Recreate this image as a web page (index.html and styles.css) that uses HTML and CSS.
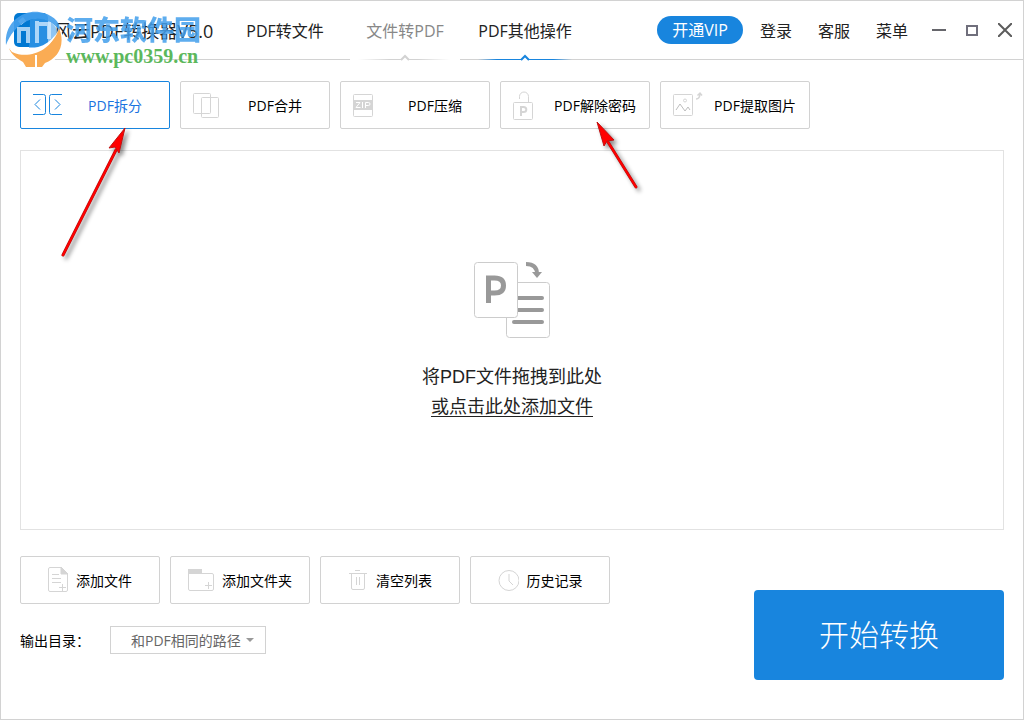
FILE: index.html
```html
<!DOCTYPE html>
<html lang="zh-CN">
<head>
  <meta charset="UTF-8">
  <meta name="viewport" content="width=device-width, initial-scale=1.0">
  <title>风云PDF转换器</title>
  <link rel="stylesheet" href="styles.css">
</head>
<body>
<div class="window">
  <header>
    <div class="brand">
      <svg class="logo" width="34" height="34" viewBox="0 0 34 34">
        <rect width="34" height="34" rx="5" fill="#0078d2"/>
        <path d="M4 8l5-4 3 4-5 4z" fill="#fff" opacity=".8"/>
      </svg>
      <h1>风云PDF转换器V5.0</h1>
    </div>
    <nav>
      <a href="#" class="tab">PDF转文件</a>
      <a href="#" class="tab hover">文件转PDF
        <svg class="mark" width="110" height="7" viewBox="0 0 110 7">
          <defs>
            <linearGradient id="fadeGrey">
              <stop offset="0" stop-color="#d2d2d2" stop-opacity="0"/>
              <stop offset=".35" stop-color="#d2d2d2"/>
              <stop offset=".65" stop-color="#d2d2d2"/>
              <stop offset="1" stop-color="#d2d2d2" stop-opacity="0"/>
            </linearGradient>
          </defs>
          <rect y="3" width="110" height="4" fill="#fff"/>
          <rect x="8" y="5" width="92" height="1" fill="url(#fadeGrey)"/>
          <path d="M51 6l4-4 4 4" fill="#fff" stroke="#d2d2d2" stroke-width="2"/>
        </svg>
      </a>
      <a href="#" class="tab current">PDF其他操作
        <svg class="mark" width="110" height="7" viewBox="0 0 110 7">
          <defs>
            <linearGradient id="fadeBlue">
              <stop offset="0" stop-color="#1885de" stop-opacity="0"/>
              <stop offset=".2" stop-color="#1885de"/>
              <stop offset=".8" stop-color="#1885de"/>
              <stop offset="1" stop-color="#1885de" stop-opacity="0"/>
            </linearGradient>
          </defs>
          <rect x="8" y="5" width="94" height="1" fill="url(#fadeBlue)"/>
          <path d="M51 6l4-4 4 4" fill="#fff" stroke="#1885de" stroke-width="2"/>
        </svg>
      </a>
    </nav>
    <div class="account">
      <button class="vip">开通VIP</button>
      <a href="#">登录</a>
      <a href="#">客服</a>
      <a href="#">菜单</a>
    </div>
    <div class="controls">
      <button aria-label="最小化">
        <svg width="14" height="14" viewBox="0 0 14 14"><path d="M0 7h14" stroke="#66666b" stroke-width="2"/></svg>
      </button>
      <button aria-label="最大化">
        <svg width="14" height="14" viewBox="0 0 14 14"><rect x="2" y="3" width="10" height="9" fill="none" stroke="#706f7c" stroke-width="2"/></svg>
      </button>
      <button aria-label="关闭">
        <svg width="14" height="14" viewBox="0 0 14 14"><path d="M0 0l14 14M14 0L0 14" stroke="#5c5c5c" stroke-width="2"/></svg>
      </button>
    </div>
  </header>

  <main>
    <div class="tools">
      <button class="tool selected">
        <svg width="34" height="28" viewBox="0 0 34 28" fill="none" stroke="#1885de">
          <path d="M0 3.500h10.500q2 0 2 2v16q0 2-2 2H0M29 3.500H18.500q-2 0-2 2v16q0 2 2 2H29"/>
          <path d="M7 8.500l-5 5 5 5M22 8.500l5 5-5 5"/>
        </svg>
        <span>PDF拆分</span>
      </button>
      <button class="tool">
        <svg width="34" height="28" viewBox="0 0 34 28" fill="none" stroke="#d5d5d5">
          <rect x=".5" y="2.500" width="17" height="20" rx="1"/>
          <rect x="8.500" y="6.500" width="17" height="20" rx="1"/>
        </svg>
        <span>PDF合并</span>
      </button>
      <button class="tool">
        <svg width="34" height="28" viewBox="0 0 34 28" fill="none" stroke="#d5d5d5">
          <rect x=".5" y="3.500" width="19" height="22" rx="1"/>
          <path d="M0 9h20v10H0z" fill="#d5d5d5" stroke="none"/>
          <path d="M3 11.500h4l-4 5h4.500M9.500 11v6M12.500 17v-5.500h3q1.500 0 1.500 1.500t-1.500 1.500h-3" stroke="#fff"/>
        </svg>
        <span>PDF压缩</span>
      </button>
      <button class="tool">
        <svg width="34" height="28" viewBox="0 0 34 28" fill="none" stroke="#d5d5d5">
          <rect x=".5" y="11.500" width="19" height="17" rx="1"/>
          <path d="M6.500 8V5.500a4.500 4.500 0 0 1 9 0V11"/>
          <path d="M8 25v-9h2.500q2.800 0 2.800 2.500t-2.800 2.500H8" stroke-width="2"/>
        </svg>
        <span>PDF解除密码</span>
      </button>
      <button class="tool">
        <svg width="34" height="28" viewBox="0 0 34 28" fill="none" stroke="#d5d5d5">
          <rect x=".5" y="3.500" width="19" height="21" rx="1"/>
          <circle cx="12" cy="9.500" r="1.500"/>
          <path d="M3 19l4-6 5 7 3-4 2 3" stroke="#bdbdbd"/>
          <path d="M23 8q4 0 4-6M24.500 4.500L27 2l2 2.500" stroke-width="1.500"/>
        </svg>
        <span>PDF提取图片</span>
      </button>
    </div>

    <section class="drop">
      <svg width="76" height="76" viewBox="0 0 76 76">
        <rect x="32.500" y="20.500" width="43" height="55" rx="3" fill="#fff" stroke="#ccc"/>
        <path d="M40 36h28M40 48h28M40 60h28" stroke="#999" stroke-width="4" stroke-linecap="round"/>
        <rect x=".5" y=".5" width="43" height="55" rx="3" fill="#fff" stroke="#ccc"/>
        <path d="M14.500 41V16h6q9 0 9 7.500t-9 7.500h-6" fill="none" stroke="#999" stroke-width="5"/>
        <path d="M52 2q11 0 11 10" fill="none" stroke="#999" stroke-width="4"/>
        <path d="M58 10h10l-5 6z" fill="#999"/>
      </svg>
      <p>将PDF文件拖拽到此处</p>
      <a href="#">或点击此处添加文件</a>
    </section>

    <div class="bottom">
      <div class="options">
        <div class="actions">
          <button>
            <svg width="20" height="28" viewBox="0 0 20 28" fill="none" stroke="#d5d5d5">
              <path d="M13 1.500H2q-1.500 0-1.500 1.500v21q0 1.500 1.500 1.500h16q1.500 0 1.500-1.500V8z"/>
              <path d="M13 1v7h7z" fill="#d5d5d5"/>
              <path d="M4 8.500h7M4 12.500h9M4 16.500h9M11 21.500h7M14.500 18v7"/>
            </svg>
            添加文件
          </button>
          <button>
            <svg width="26" height="28" viewBox="0 0 26 28" fill="none" stroke="#d5d5d5">
              <path d="M0 3h14v4H0z" fill="#d5d5d5" stroke="none"/>
              <path d="M.5 6v17q0 1.500 1.500 1.500h22q1.500 0 1.500-1.500V9q0-1.500-1.500-1.500H.5M17 19.500h7M20.500 16v7"/>
            </svg>
            添加文件夹
          </button>
          <button>
            <svg width="20" height="28" viewBox="0 0 20 28" fill="none" stroke="#d5d5d5">
              <path d="M7 4.500h5M1 7.500h18M3.500 8v14q0 1.500 1.500 1.500h10q1.500 0 1.500-1.500V8M8.500 11v8M11.500 11v8"/>
            </svg>
            清空列表
          </button>
          <button>
            <svg width="21" height="28" viewBox="0 0 21 28" fill="none" stroke="#d5d5d5">
              <circle cx="11" cy="14.500" r="10"/>
              <path d="M11 8v7l4 4"/>
            </svg>
            历史记录
          </button>
        </div>
        <div class="output">
          <label for="outputDir">输出目录：</label>
          <span class="picker">
            <select id="outputDir">
              <option>和PDF相同的路径</option>
            </select>
          </span>
        </div>
      </div>
      <button class="start">开始转换</button>
    </div>
  </main>

  <!-- site stamp -->
  <div class="stamp">
    <svg width="58" height="60" viewBox="0 0 58 60">
      <path d="M1 35C-1 12 18 0 34 2c13 2 22 10 21 19-9-12-21-15-33-10C11 16 5 25 1 35z" fill="#429fec" opacity=".9"/>
      <path d="M25 10c12-4 23 1 28 11 0 8-7 14-16 17H24z" fill="#429fec" opacity=".6"/>
      <path d="M14 33V19h9v14M32 11v22M32 14h12v15" fill="none" stroke="#d9edff" stroke-width="4" opacity=".75"/>
      <path d="M2 37c16 6 42 2 51-16l3-1c6 18-3 30-14 35H19C11 50 5 44 2 37z" fill="#fff"/>
      <path d="M4 38c18 9 44 3 50-20 7 17-1 30-14 35l-3 4h-5V45h-2v12h-9l-3-5C11 48 6 44 4 38z" fill="#faac54"/>
      <path d="M3 37c14 8 38 4 47-12-5 15-26 25-43 17z" fill="#fff"/>
    </svg>
    <div class="stamp-text">
      <strong>河东软件园</strong>
      <span>www.pc0359.cn</span>
    </div>
  </div>

  <!-- pointer arrows -->
  <svg class="pointer pointer-split" width="76" height="140" viewBox="0 0 76 140">
    <path d="M6 131L59 26" stroke="#b01010" stroke-width="3" stroke-linecap="round"/>
    <path d="M6 131L59 26" stroke="#f00" stroke-width="2" stroke-linecap="round"/>
    <path d="M68 4L52 24l6-1 4 6z" fill="#f00" stroke="#c01010"/>
  </svg>
  <svg class="pointer pointer-unlock" width="56" height="80" viewBox="0 0 56 80">
    <path d="M45 68L17 23" stroke="#b01010" stroke-width="3" stroke-linecap="round"/>
    <path d="M45 68L17 23" stroke="#f00" stroke-width="2" stroke-linecap="round"/>
    <path d="M6 3l7 24 3-5 7-1z" fill="#f00" stroke="#c01010"/>
  </svg>
</div>
</body>
</html>
```
FILE: styles.css
```css
* { box-sizing: border-box; }

body {
  margin: 0;
  font-family: "Open Sans", "Noto Sans CJK SC", sans-serif;
  font-size: 14px;
  color: #000;
  background: #fff;
}

button, select {
  font: inherit;
  color: inherit;
  background: #fff;
  cursor: pointer;
}

a {
  color: inherit;
  text-decoration: none;
}

.window {
  position: relative;
  display: flex;
  flex-direction: column;
  min-height: 100vh;
  border: 1px solid #d2d2d2;
}

/* Header */
header {
  display: flex;
  align-items: center;
  height: 59px;
  padding-right: 11px;
  border-bottom: 1px solid #d2d2d2;
  font-size: 16px;
  color: #222;
}

.brand {
  display: flex;
  align-items: center;
  gap: 6px;
  width: 224px;
  padding-left: 13px;
}

h1 {
  margin: 0;
  font-size: 18px;
  font-weight: 400;
  white-space: nowrap;
}

nav {
  display: flex;
  align-self: stretch;
}

.tab {
  position: relative;
  display: flex;
  align-items: center;
  justify-content: center;
  width: 120px;
  white-space: nowrap;
}

.tab.hover {
  color: #888;
}

.mark {
  position: absolute;
  left: 5px;
  bottom: -2px;
}

.account {
  display: flex;
  align-items: center;
  gap: 26px;
  margin-left: auto;
}

.vip {
  width: 86px;
  height: 28px;
  margin-right: -9px;
  padding: 0;
  border: none;
  border-radius: 14px;
  line-height: 28px;
  color: #fff;
  background: #1885de;
}

.controls {
  display: flex;
  gap: 19px;
  margin-left: 24px;
}

.controls button {
  display: flex;
  padding: 0;
  border: none;
}

/* Content */
main {
  display: flex;
  flex: 1;
  flex-direction: column;
  padding: 21px 19px 39px;
}

.tools, .actions {
  display: flex;
  gap: 10px;
}

.tool {
  display: flex;
  align-items: center;
  width: 150px;
  height: 48px;
  padding: 0 6px 0 12px;
  border: 1px solid #d2d2d2;
  border-radius: 2px;
}

.tool svg {
  flex: none;
  overflow: visible;
}

.tool span {
  flex: 1;
  white-space: nowrap;
}

.selected {
  border-color: #1885de;
  color: #1a73e0;
}

.drop {
  display: flex;
  flex: 1;
  flex-direction: column;
  align-items: center;
  justify-content: center;
  min-height: 240px;
  margin: 21px 0 26px;
  border: 1px solid #e2e2e2;
  font-family: "Liberation Sans", "Noto Sans CJK SC", sans-serif;
  font-size: 18px;
  line-height: 22px;
  color: #222;
}

.drop p {
  margin: 28px 0 8px;
}

.drop a {
  text-decoration: underline;
  text-decoration-thickness: 1px;
  text-underline-offset: 3px;
}

/* Bottom bar */
.bottom {
  display: flex;
  align-items: flex-end;
  justify-content: space-between;
}

.options {
  padding-bottom: 26px;
}

.actions button {
  display: flex;
  align-items: center;
  justify-content: center;
  gap: 8px;
  width: 140px;
  height: 48px;
  padding: 0;
  border: 1px solid #d2d2d2;
  border-radius: 2px;
}

.output {
  display: flex;
  align-items: center;
  margin-top: 22px;
}

.output label {
  width: 90px;
  font-family: "Noto Sans CJK SC", sans-serif;
}

.picker {
  position: relative;
}

.picker select {
  display: block;
  width: 156px;
  height: 28px;
  padding: 0 20px;
  border: 1px solid #d2d2d2;
  border-radius: 0;
  color: #666;
  appearance: none;
}

.picker::after {
  content: "";
  position: absolute;
  top: 12px;
  right: 12px;
  border: 4px solid transparent;
  border-top-color: #999;
  border-bottom: none;
  pointer-events: none;
}

.start {
  width: 250px;
  height: 90px;
  padding: 0 0 4px;
  border: none;
  border-radius: 4px;
  font-size: 30px;
  font-weight: 300;
  color: #fff;
  background: #1885de;
}

/* Overlays */
.stamp {
  position: absolute;
  top: 9px;
  left: 4px;
  display: flex;
  gap: 3px;
  pointer-events: none;
}

.stamp-text {
  display: flex;
  flex-direction: column;
  padding-top: 5px;
  font-weight: bold;
}

.stamp-text strong {
  font-size: 27px;
  line-height: 30px;
  color: #429fec;
  opacity: 0.85;
}

.stamp-text span {
  font-family: "Liberation Serif", serif;
  font-size: 20px;
  line-height: 22px;
  color: #5cb85c;
}

.pointer {
  position: absolute;
  filter: drop-shadow(3px 3px 2px rgba(0, 0, 0, 0.45));
  pointer-events: none;
}

.pointer-split {
  top: 123px;
  left: 56px;
}

.pointer-unlock {
  top: 118px;
  left: 590px;
}
```
